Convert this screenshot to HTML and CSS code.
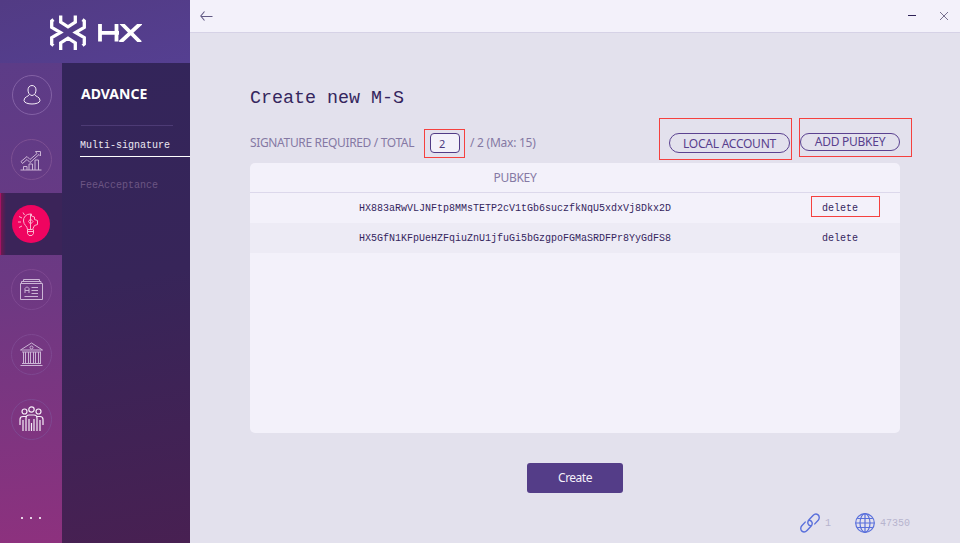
FILE: index.html
```html
<!DOCTYPE html>
<html lang="en">
<head>
<meta charset="utf-8">
<title>HX Wallet</title>
<link rel="stylesheet" href="styles.css">
</head>
<body>
<div class="app">
  <aside class="side">
    <div class="brand">
      <svg class="mark" width="36" height="36" viewBox="0 0 36 36" fill="none" stroke="#fff" stroke-width="3.300"><path d="M10.700 .5V7.200L18 11.800l7.300-4.600V.5M10.700 35V27.800L18 23.200l7.300 4.600V35M3.500 4.600 1.700 6v6.300l8.800 5.200-8.800 5.200V29l1.800 1.400M32.500 4.600 34.300 6v6.300l-8.800 5.200 8.800 5.200V29l-1.800 1.400"/></svg>
      <svg class="word" width="44" height="18" viewBox="0 0 44 18" fill="none" stroke="#fff" stroke-width="3.800"><path d="M2 0v17.500M18.500 0v17.500M2 8.800h19M23-1 42.500 18.500M43-1 22 18.500"/></svg>
    </div>
    <div class="columns">
      <nav class="rail">
        <a class="item"><span class="ring bright"><svg viewBox="0 0 28 28"><path d="M14 4.500c-2.600 0-4 2-4 4.500 0 2.600 1.400 5.500 4 5.500s4-2.900 4-5.500c0-2.500-1.400-4.500-4-4.500zM11.200 13.600C11 15.500 6 15.500 6 19.400c0 4.800 16 4.800 16 0 0-3.900-5-3.900-5.200-5.800"/></svg></span></a>
        <a class="item"><span class="ring"><svg viewBox="1 0 28 28"><path d="M3.500 24h21M6.500 24v-3.500H10V24M12 24v-6h3.500v6M18 24V14h3.500v10M4 15.500l6-5 3 3 7-6-1.500-2h5v4.500L22 8.500l-9 8-3-3-4.500 4z"/></svg></span></a>
        <a class="item active"><span class="ring"><svg viewBox="1 0 28 28"><path d="M11.500 19.500c0-3.500-4-4.500-4-8.500a6.500 6.500 0 0 1 6.500-7h1.500v2l3 1v2.500l3 1v4l-3 1-2 4zM11.500 19.500v4l1.500 2h3l1.500-2v-4M11.500 21.500h6M14.500 4v15M14.500 9l2.500 2.500-2.500 2.500-2-2.500zM2 12h3M3 6.500l3 1.500M7 2.500l1.500 2.500M3 17.500 6 16"/></svg></span></a>
        <a class="item dim"><span class="ring"><svg viewBox="1 1 28 28"><path d="M3.500 8.500h22v16h-22zM4.500 8.500v-2H24v2M6.500 6.500v-2h16v2M8 18v-4.500L9.500 12h1l1.500 1.500V18M8 15.500h4M14.500 12.500H21M14.500 15.500H21M14.500 18.500H21M7.500 21.500H21"/></svg></span></a>
        <a class="item dim"><span class="ring"><svg viewBox="1 1 28 28"><path d="M3.500 10 14.500 3l11 7zM5 12h19M5 23.500h19M3.500 25.500h22M6.500 12v11.500M8.500 12v11.500M11.500 12v11.500M13.500 12v11.500M16.500 12v11.500M18.500 12v11.500M21.500 12v11.500M23.500 12v11.500"/><circle cx="14.500" cy="7.500" r="1.500"/></svg></span></a>
        <a class="item dim"><span class="ring solid"><svg viewBox="1 1 28 28"><circle cx="14.500" cy="4.500" r="2.700"/><circle cx="7.500" cy="6.500" r="2.500"/><circle cx="21.500" cy="6.500" r="2.500"/><path d="M9 19v-6q0-3 3-3h5q3 0 3 3v6M12 14v12M17 14v12M14.500 18v8M9 11.500H6q-3 0-3 3V20M6 15v11M9 18v8M20 11.500h3q3 0 3 3V20M23 15v11M20 18v8"/></svg></span></a>
        <div class="more"><i></i><i></i><i></i></div>
      </nav>
      <nav class="submenu">
        <h2>ADVANCE</h2>
        <a class="current">Multi-signature</a>
        <a class="other">FeeAcceptance</a>
      </nav>
    </div>
  </aside>
  <main class="main">
    <header class="bar">
      <svg width="14" height="12" viewBox="0 0 14 12" fill="none" stroke="#625a84" stroke-width="1.100"><path d="M4.500 1.500.8 6l3.700 4.500M1 6.500h11.500"/></svg>
      <span class="controls"><i class="min"></i><svg width="10" height="10" viewBox="0 0 10 10" fill="none" stroke="#77718f"><path d="m1 1 8 8M9 1 1 9"/></svg></span>
    </header>
    <section class="content">
      <h1>Create new M-S</h1>
      <div class="tools">
        <span class="caption">SIGNATURE REQUIRED / TOTAL</span>
        <span class="count marked">2</span>
        <span class="total">/ 2 (Max: 15)</span>
        <span class="btn local marked">LOCAL ACCOUNT</span>
        <span class="btn add marked">ADD PUBKEY</span>
      </div>
      <div class="table">
        <div class="row head"><span>PUBKEY</span></div>
        <div class="row"><span>HX883aRwVLJNFtp8MMsTETP2cV1tGb6suczfkNqU5xdxVj8Dkx2D</span><span class="del marked">delete</span></div>
        <div class="row alt"><span>HX5GfN1KFpUeHZFqiuZnU1jfuGi5bGzgpoFGMaSRDFPr8YyGdFS8</span><span class="del">delete</span></div>
      </div>
      <div class="create">Create</div>
    </section>
    <footer class="status">
      <svg width="20" height="20" viewBox="0 0 20 20" fill="none" stroke="#596fdb" stroke-width="1.400" stroke-linecap="round"><path d="M10.500 12.800C7.500 12 7 9 9 6.800l4-4.300c1.500-1.600 3.600-1.900 5.100-.6s1.500 3.700.1 5.300l-3.400 3.700M9.500 7.200c3 .8 3.500 3.800 1.500 6l-4 4.300c-1.500 1.600-3.600 1.900-5.100.6s-1.500-3.700-.1-5.300l3.400-3.700"/></svg>
      <span class="links">1</span>
      <svg width="20" height="20" viewBox="0 0 20 20" fill="none" stroke="#596fdb" stroke-width="1.200"><circle cx="10" cy="10" r="9.300"/><ellipse cx="10" cy="10" rx="5" ry="9.300"/><path d="M10 .7v18.600M.7 10h18.600M2.300 5.500h15.400M2.300 14.500h15.400"/></svg>
      <span>47350</span>
    </footer>
  </main>
</div>
</body>
</html>
```
FILE: styles.css
```css
* { box-sizing: border-box; }
body { margin: 0; font: 12px "Noto Sans", sans-serif; color: #3a2a66; }
h1, h2 { margin: 0; }
i { display: block; }
.app { display: flex; width: 960px; height: 543px; overflow: hidden; background: #e3e1ed; }
.side { width: 190px; display: flex; flex-direction: column; }
.brand { height: 63px; padding: 15px 0 0 50px; display: flex; gap: 12px; background: linear-gradient(165deg, #523b84, #553f91); }
.word { margin-top: 9px; }
.columns { flex: 1; display: flex; }
.rail { width: 62px; background: linear-gradient(175deg, #5c3c87, #6c3983 45%, #8d317e); }
.item { display: flex; height: 65px; padding-bottom: 2px; align-items: center; justify-content: center; }
.ring { width: 41px; height: 41px; margin-left: 1px; border: 1px solid #7d5093; border-radius: 50%; display: flex; align-items: center; justify-content: center; }
.ring svg { flex: none; width: 28px; height: 28px; fill: none; stroke: #cbb4d5; stroke-width: 1; }
.bright { width: 40px; height: 40px; border-color: #8361a5; }
.dim .ring { border-color: #7e4891; }
.ring.bright svg, .ring.solid svg { stroke: #f5edf7; }
.ring.solid svg { stroke-width: 1.2; }
.active { height: 62px; margin-bottom: 3px; padding-bottom: 0; border-left: 1px solid #a41465; background: linear-gradient(90deg, #70184f, #3b2459 5px); }
.active .ring { width: 38px; height: 38px; margin-left: -1px; background: #ef0460; border: 0; }
.active .ring svg { stroke: #fbb3ce; }
.more { display: flex; gap: 7px; padding: 64px 0 0 21px; }
.more i { width: 2px; height: 2px; background: #e9d5e8; }
.submenu { width: 128px; padding-left: 18px; background: linear-gradient(170deg, #33255a, #372559 45%, #482052); }
.submenu h2 { height: 63px; width: 92px; margin-left: 1px; padding-top: 21px; font-size: 14px; line-height: 20px; color: #fff; border-bottom: 1px solid #4d3b75; }
.submenu a { display: block; font: 10px/14px "Liberation Mono", monospace; }
.current { height: 31px; padding-top: 13px; color: #ece8f2; border-bottom: 1px solid #fff; }
.other { padding-top: 22px; color: #6c5583; }
.main { flex: 1; display: flex; flex-direction: column; }
.bar { height: 33px; padding: 0 11px 1px 10px; display: flex; align-items: center; justify-content: space-between; background: #f3f1fa; border-bottom: 1px solid #d6d2e6; }
.controls { display: flex; align-items: center; gap: 23px; }
.min { width: 8px; height: 1px; background: #2d2156; }
.content { height: 474px; width: 710px; padding: 54px 0 0 60px; }
h1 { height: 46px; font: 18.33px/24px "Liberation Mono", monospace; color: #35265e; }
.tools { display: flex; height: 30px; line-height: 20px; color: #8579a4; }
.caption { width: 180px; letter-spacing: -.35px; white-space: nowrap; }
.marked { position: relative; }
.marked::after { content: ""; box-sizing: border-box; position: absolute; border: 1px solid #f5413f; }
.count { width: 30px; height: 20px; padding-left: 8px; font: 11px/19px "Noto Sans", sans-serif; border: 1px solid #513b86; border-radius: 4px; background: #f3f1fa; color: #4d397e; }
.count::after { inset: -5px -6px -6px -7px; }
.total { margin-left: 10px; letter-spacing: -.25px; }
.btn { height: 20px; line-height: 19px; text-align: center; border: 1px solid #5b4290; border-radius: 10px; color: #583f8d; white-space: nowrap; letter-spacing: -.25px; }
.local { width: 121px; margin-left: auto; }
.local::after { inset: -16px -3px -8px -11px; }
.add { width: 100px; height: 18px; line-height: 16px; margin-left: 10px; }
.add::after { inset: -16px -13px -7px -2px; }
.table { height: 270px; border-radius: 5px; overflow: hidden; background: #f3f1fa; }
.row { display: grid; grid-template-columns: 530px 120px; height: 30px; padding-top: 2px; align-items: center; text-align: center; font: 10px/20px "Liberation Mono", monospace; color: #35265e; }
.head { padding-top: 1px; font: 12px/20px "Noto Sans", sans-serif; color: #8579a4; border-bottom: 1px solid #dcd8eb; letter-spacing: -.3px; }
.alt { background: #edebf5; }
.del.marked::after { left: 31px; top: -3px; width: 69px; height: 21px; }
.create { width: 96px; height: 30px; margin: 30px auto 0; border-radius: 3px; background: #543d88; color: #f4f1fa; text-align: center; line-height: 30px; letter-spacing: -.5px; }
.status { display: flex; align-items: center; height: 32px; padding-left: 610px; font: 10px/20px "Liberation Mono", monospace; color: #b7b4ce; }
.status span { margin-left: 5px; padding-top: 2px; }
.status .links { width: 30px; }
```
